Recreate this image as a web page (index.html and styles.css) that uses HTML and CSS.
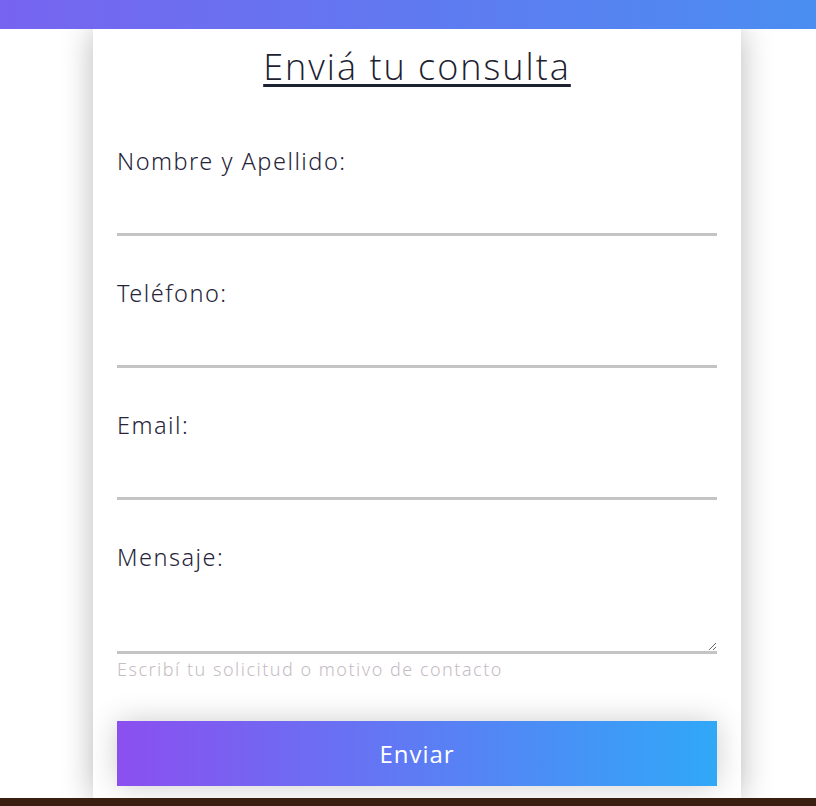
FILE: index.html
```html
<!DOCTYPE html>
<html lang="es">
<head>
<meta charset="utf-8">
<title>Enviá tu consulta</title>
<link rel="stylesheet" href="styles.css">
</head>
<body>
<header class="topbar"></header>
<main class="card">
  <h1 class="title">Enviá tu consulta</h1>
  <form class="form">
    <div class="field">
      <label class="label" for="nombre">Nombre y Apellido:</label>
      <input class="input" id="nombre" type="text">
    </div>
    <div class="field">
      <label class="label" for="tel">Teléfono:</label>
      <input class="input" id="tel" type="text">
    </div>
    <div class="field">
      <label class="label" for="email">Email:</label>
      <input class="input" id="email" type="text">
    </div>
    <div class="field field-msg">
      <label class="label" for="msg">Mensaje:</label>
      <textarea class="textarea" id="msg"></textarea>
      <span class="hint">Escribí tu solicitud o motivo de contacto</span>
    </div>
    <button class="submit" type="button">Enviar</button>
  </form>
</main>
<footer class="footer"></footer>
</body>
</html>
```

FILE: styles.css
```css
* { box-sizing: border-box; }
html, body { margin: 0; padding: 0; background: #fff; }
body {
  height: 806px;
  overflow: hidden;
  display: flex;
  flex-direction: column;
  font-family: "Noto Sans", "Open Sans", sans-serif;
}
.topbar {
  height: 29px;
  flex: none;
  background: linear-gradient(90deg, #7764f0 0%, #4a8ef1 100%);
  position: relative;
  z-index: 2;
}
.card {
  width: 648px;
  margin-left: 93px;
  background: #fff;
  box-shadow: 0 0 30px rgba(0,0,0,0.28);
  padding: 18px 24px 12px;
  flex: none;
  height: 769px;
}
.title {
  margin: 0;
  text-align: center;
  font-family: "Open Sans", sans-serif;
  font-weight: 300;
  font-size: 36px;
  line-height: 40px;
  letter-spacing: 2px;
  color: #1c2230;
  text-decoration: underline;
  text-decoration-thickness: 3px;
  text-underline-offset: 4px;
}
.form {
  margin-top: 60px;
  display: flex;
  flex-direction: column;
}
.field {
  display: flex;
  flex-direction: column;
  margin-bottom: 43px;
}
.label {
  font-size: 23.5px;
  line-height: 28px;
  font-weight: 350;
  color: #25243a;
  letter-spacing: 1.5px;
}
.input, .textarea {
  border: none;
  border-bottom: 3px solid #c4c4c4;
  outline: none;
  background: transparent;
  font: inherit;
  width: 100%;
  padding: 0;
}
.input { height: 61px; }
.textarea { height: 83px; resize: vertical; display: block; }
.field-msg { margin-bottom: 41px; }
.hint {
  margin-top: 4px;
  font-size: 18px;
  line-height: 22px;
  font-weight: 300;
  color: #c6bcc4;
  letter-spacing: 1.5px;
}
.submit {
  height: 65px;
  border: none;
  width: 100%;
  background: linear-gradient(90deg, #8b4ff0 0%, #30a8f8 100%);
  color: #fff;
  font-family: "Open Sans", sans-serif;
  font-size: 24px;
  letter-spacing: 1px;
  box-shadow: 0 0 30px rgba(0,0,0,0.2);
  padding: 0;
}
.footer {
  flex: none;
  height: 8px;
  background: #3a1e12;
}
```
